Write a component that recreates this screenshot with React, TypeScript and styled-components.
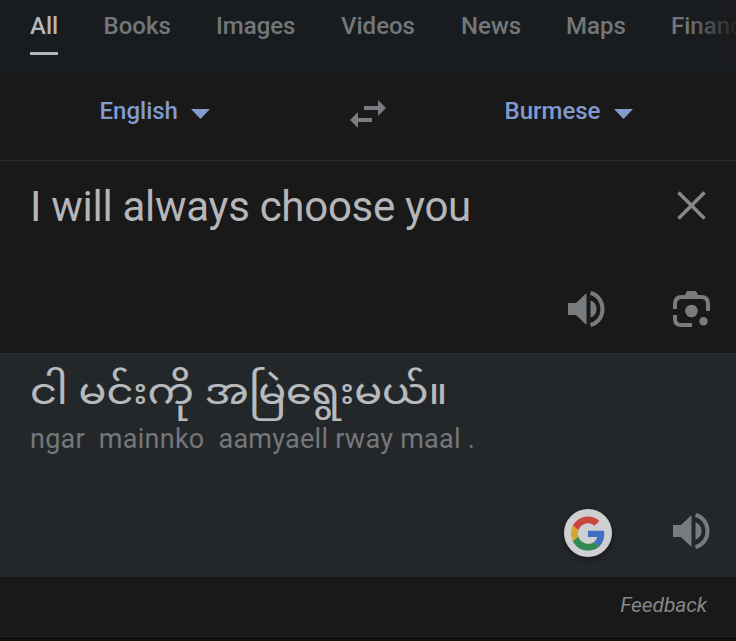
import React from "react";
import styled, { createGlobalStyle } from "styled-components";

const Global = createGlobalStyle`
  body { margin: 0; background: #191919; }
  * { box-sizing: border-box; }
  svg { display: block; }
`;

const Page = styled.main`
  width: 736px;
  height: 641px;
  overflow: hidden;
  display: flex;
  flex-direction: column;
  background: #191919;
  color: #bdc1c6;
  font-family: Roboto, "Noto Sans", sans-serif;
`;

const Tabs = styled.nav`
  position: relative;
  flex: 0 0 79px;
  display: grid;
  grid-template-columns: 73.5px 112.5px 125px 120px 105px 105px 120px;
  align-items: start;
  padding-left: 30px;
  overflow: hidden;
  background: linear-gradient(#191c1f 0 66px, #1a1e21 66px 69px, #181b1e 69px 73px, #191919);
`;

const Fade = styled.div`
  position: absolute;
  top: 0;
  right: 0;
  width: 50px;
  height: 62px;
  background: linear-gradient(90deg, #191b1d00, #191b1de8);
`;

const Tab = styled.span<{ $active?: boolean }>`
  justify-self: start;
  height: 55px;
  padding-top: 12px;
  border-bottom: 3px solid ${(p) => (p.$active ? "#b4b6b8" : "transparent")};
  color: ${(p) => (p.$active ? "#b4b7b9" : "#73777a")};
  font-size: 24px;
  font-weight: 500;
  line-height: 28px;
  white-space: nowrap;
`;

const Languages = styled.div`
  flex: 0 0 82px;
  display: grid;
  grid-template-columns: 350px 36px 1fr;
  align-items: start;
  border-bottom: 1px solid #2b2c2d;
`;

const Language = styled.div<{ $start: number }>`
  display: flex;
  gap: 13.5px;
  padding: 18px 0 0 ${(p) => p.$start}px;
  color: #819bd0;
  font-size: 24px;
  font-weight: 500;
  line-height: 28px;
  svg { margin-top: 12px; }
`;

const Swap = styled.div`
  padding-top: 21px;
`;

const Source = styled.section`
  flex: 0 0 192px;
  display: flex;
  flex-direction: column;
  justify-content: space-between;
  padding: 20px 25px 25px 30px;
`;

const Row = styled.div`
  display: flex;
  justify-content: space-between;
`;

const Phrase = styled.div`
  font-size: 42px;
  line-height: 52px;
  letter-spacing: -0.28px;
  color: #b5b6b9;
  white-space: nowrap;
`;

const Clear = styled.div`
  padding: 10px 5px 0 0;
`;

const Actions = styled.div<{ $gap: number }>`
  display: flex;
  justify-content: flex-end;
  align-items: center;
  gap: ${(p) => p.$gap}px;
`;

const Target = styled.section`
  flex: 0 0 224px;
  display: flex;
  flex-direction: column;
  padding: 7px 25px 20px 30px;
  background: #24272a;
  border-top: 1px solid #2a2d30;
  ${Actions} { margin-top: auto; }
`;

const Translation = styled.div`
  height: 62px;
  padding-top: 4px;
  font-family: "Noto Sans Myanmar", Padauk, "Noto Sans", sans-serif;
  font-size: 37px;
  line-height: 62px;
  color: #b8bbbe;
  -webkit-text-stroke: 0.2px #b8bbbe;
  white-space: nowrap;
  transform: scaleX(1.115);
  transform-origin: left;
`;

const Romanized = styled.div`
  font-size: 27px;
  line-height: 32px;
  letter-spacing: 0.26px;
  color: #75777b;
  white-space: pre;
`;

const Badge = styled.div`
  width: 48px;
  height: 48px;
  display: grid;
  place-items: center;
  border-radius: 50%;
  background: #cfcfd1;
  box-shadow: 0 2px 6px #0006;
`;

const Lift = styled.div`
  padding-bottom: 4px;
`;

const Footer = styled.footer`
  flex: 0 0 60px;
  padding: 14px 29px 0 0;
  border-bottom: 1px solid #242424;
  text-align: right;
  font-size: 21px;
  line-height: 28px;
  letter-spacing: -0.1px;
  font-style: italic;
  color: #85878a;
`;

const Edge = styled.div`
  flex: 1;
  background: #101010;
`;

const Caret = () => (
  <svg width="19" height="10" viewBox="0 0 19 10"><path d="M0 0h19L9.5 10z" fill="#819bd0" /></svg>
);

const Speaker = () => (
  <svg width="38" height="38" viewBox="0 0 38 38" fill="#797c7f">
    <path d="M0 13h8L18.500 3v32L8 25H0zM22.500 10.500a9 9 0 0 1 0 17z" />
    <path d="M22.500 3C38.500 7 38.500 31 22.500 35" fill="none" stroke="#797c7f" strokeWidth="4" />
  </svg>
);

const Lens = () => (
  <svg width="38" height="38" viewBox="0 0 38 38" fill="#797c7f">
    <path d="M2 19V14q0-7 7-7h19q7 0 7 7v7M2 25v4q0 6 6 6h11" fill="none" stroke="#797c7f" strokeWidth="4" />
    <path d="M11.500 6L14 1h9l2.500 5z" />
    <circle cx="18.500" cy="21" r="6.300" />
    <circle cx="30.500" cy="31.200" r="4.200" />
  </svg>
);

const GoogleMark = () => (
  <svg width="34" height="35" viewBox="0 0 48 48">
    <path fill="#c9473e" d="M24 9.500c3.540 0 6.710 1.220 9.210 3.600l6.850-6.850C35.900 2.380 30.470 0 24 0 14.620 0 6.510 5.380 2.560 13.220l7.980 6.190C12.430 13.720 17.740 9.500 24 9.500z" />
    <path fill="#3e6fc5" d="M46.980 24.550c0-1.570-.15-3.090-.38-4.550H24v9.020h12.940c-.58 2.960-2.260 5.480-4.780 7.180l7.730 6c4.510-4.180 7.090-10.360 7.090-17.650z" />
    <path fill="#d5a72e" d="M10.530 28.590c-.48-1.450-.76-2.990-.76-4.590s.27-3.140.76-4.590l-7.980-6.190C.92 16.460 0 20.120 0 24c0 3.880.92 7.540 2.560 10.780l7.970-6.190z" />
    <path fill="#338a50" d="M24 48c6.480 0 11.930-2.130 15.890-5.810l-7.730-6c-2.150 1.450-4.920 2.300-8.160 2.300-6.260 0-11.570-4.220-13.470-9.910l-7.980 6.190C6.510 42.620 14.620 48 24 48z" />
  </svg>
);

export default function App() {
  return (
    <>
      <Global />
      <Page>
        <Tabs>
          {["All", "Books", "Images", "Videos", "News", "Maps", "Finance"].map((t, i) => (
            <Tab key={t} $active={i === 0}>{t}</Tab>
          ))}
          <Fade />
        </Tabs>
        <Languages>
          <Language $start={99.5}>English<Caret /></Language>
          <Swap>
            <svg width="36" height="30" viewBox="0 0 36 30" fill="#797b7e">
              <path d="M14 6h14V0l8 8-8 8v-6H14zM22 18H8v-6l-8 8 8 8v-6h14z" />
            </svg>
          </Swap>
          <Language $start={118.5}>Burmese<Caret /></Language>
        </Languages>
        <Source>
          <Row>
            <Phrase>I will always choose you</Phrase>
            <Clear>
              <svg width="29" height="29" viewBox="0 0 29 29" fill="none" stroke="#85878a" strokeWidth="3.500">
                <path d="M1.500 1.500l26 26M27.500 1.500l-26 26" />
              </svg>
            </Clear>
          </Row>
          <Actions $gap={67}><Speaker /><Lens /></Actions>
        </Source>
        <Target>
          <Translation lang="my">ငါ မင်းကို အမြဲရွေးမယ်။</Translation>
          <Romanized>{"ngar  mainnko  aamyaell rway maal ."}</Romanized>
          <Actions $gap={61}>
            <Badge><GoogleMark /></Badge>
            <Lift><Speaker /></Lift>
          </Actions>
        </Target>
        <Footer>Feedback</Footer>
        <Edge />
      </Page>
    </>
  );
}
